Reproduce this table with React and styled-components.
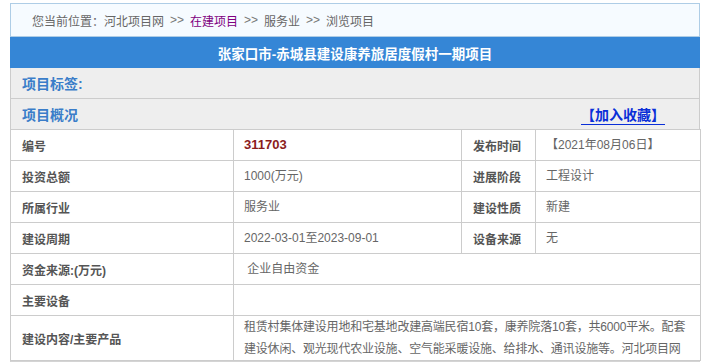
import React from "react";
import styled, { createGlobalStyle } from "styled-components";

const GlobalStyle = createGlobalStyle`
  body {
    margin: 0;
    background: #fff;
    font-family: "Liberation Sans", "Noto Sans CJK SC", sans-serif;
    font-size: 12px;
    color: #666;
  }
`;

const Wrapper = styled.div`
  width: 690px;
  margin: 3px 0 0 10px;
`;

const Crumbs = styled.div`
  box-sizing: border-box;
  height: 34px;
  display: flex;
  align-items: center;
  padding-left: 21px;
  background: #f6fbff;
  border: 1px solid #aecde6;
  color: #666;
  font-size: 12px;
`;

const Crumb = styled.span`
  color: ${(p) => (p.$active ? "#800080" : "#666")};
`;

const Sep = styled.span`
  margin: 0 6px;
  color: #777;
`;

const TitleBar = styled.h1`
  margin: 0;
  height: 31px;
  display: flex;
  align-items: center;
  justify-content: center;
  background: #3586d6;
  color: #fff;
  font-size: 13.5px;
  font-weight: bold;
`;

const GreyBar = styled.div`
  box-sizing: border-box;
  height: ${(p) => (p.$last ? "30px" : "31px")};
  display: flex;
  align-items: center;
  justify-content: space-between;
  padding: 0 34px 0 11px;
  background: #eeeeee;
  border-left: 1px solid #cccccc;
  border-right: 1px solid #cccccc;
  border-bottom: ${(p) => (p.$last ? "none" : "1px solid #cccccc")};
`;

const BarTitle = styled.span`
  color: #3a7dc9;
  font-size: 14px;
  font-weight: bold;
`;

const Collect = styled.a`
  color: #0a2fd8;
  font-size: 14px;
  font-weight: bold;
  text-decoration: underline;
  text-underline-offset: 4px;
  cursor: pointer;
`;

const Table = styled.table`
  width: 690px;
  border-collapse: collapse;
  table-layout: fixed;
  background: #fff;
`;

const Label = styled.th`
  height: 30px;
  padding: 0 0 0 11px;
  border: 1px solid #cccccc;
  text-align: left;
  font-weight: bold;
  font-size: 12px;
  color: #555;
`;

const Cell = styled.td`
  height: 30px;
  padding: 0 ${(p) => (p.$wide ? "0" : "8px")} 0 10px;
  border: 1px solid #cccccc;
  line-height: 22px;
  letter-spacing: ${(p) => (p.$wide ? "-0.2px" : "normal")};
  color: ${(p) => (p.$code ? "#8b1c1c" : "#666")};
  font-weight: ${(p) => (p.$code ? "bold" : "normal")};
  font-size: ${(p) => (p.$code ? "13px" : "12px")};
`;

const TallRow = styled.tr`
  th,
  td {
    height: 40px;
  }
`;

const Footer = styled.div`
  height: 6px;
  border-top: 2px solid #d4d4d4;
  background: #eeeeee;
  border-left: 1px solid #cccccc;
  border-right: 1px solid #cccccc;
`;

const pairs = [
  ["投资总额", "1000(万元)", "进展阶段", "工程设计"],
  ["所属行业", "服务业", "建设性质", "新建"],
  ["建设周期", "2022-03-01至2023-09-01", "设备来源", "无"],
];

export default function App() {
  return (
    <>
      <GlobalStyle />
      <Wrapper>
        <Crumbs>
          <Crumb>您当前位置：河北项目网</Crumb>
          <Sep>&gt;&gt;</Sep>
          <Crumb $active>在建项目</Crumb>
          <Sep>&gt;&gt;</Sep>
          <Crumb>服务业</Crumb>
          <Sep>&gt;&gt;</Sep>
          <Crumb>浏览项目</Crumb>
        </Crumbs>
        <TitleBar>张家口市-赤城县建设康养旅居度假村一期项目</TitleBar>
        <GreyBar>
          <BarTitle>项目标签:</BarTitle>
        </GreyBar>
        <GreyBar $last>
          <BarTitle>项目概况</BarTitle>
          <Collect>【加入收藏】</Collect>
        </GreyBar>
        <Table>
          <colgroup>
            <col style={{ width: 223 }} />
            <col style={{ width: 228 }} />
            <col style={{ width: 74 }} />
            <col style={{ width: 165 }} />
          </colgroup>
          <tbody>
            <tr>
              <Label>编号</Label>
              <Cell $code>311703</Cell>
              <Label>发布时间</Label>
              <Cell>【2021年08月06日】</Cell>
            </tr>
            {pairs.map(([a, b, c, d]) => (
              <tr key={a}>
                <Label>{a}</Label>
                <Cell>{b}</Cell>
                <Label>{c}</Label>
                <Cell>{d}</Cell>
              </tr>
            ))}
            <tr>
              <Label>资金来源:(万元)</Label>
              <Cell colSpan={3}>{"\u00a0企业自由资金"}</Cell>
            </tr>
            <tr>
              <Label>主要设备</Label>
              <Cell colSpan={3}></Cell>
            </tr>
            <TallRow>
              <Label>建设内容/主要产品</Label>
              <Cell colSpan={3} $wide>
                租赁村集体建设用地和宅基地改建高端民宿10套，康养院落10套，共6000平米。配套
                <br />
                建设休闲、观光现代农业设施、空气能采暖设施、给排水、通讯设施等。河北项目网
              </Cell>
            </TallRow>
          </tbody>
        </Table>
        <Footer />
      </Wrapper>
    </>
  );
}
